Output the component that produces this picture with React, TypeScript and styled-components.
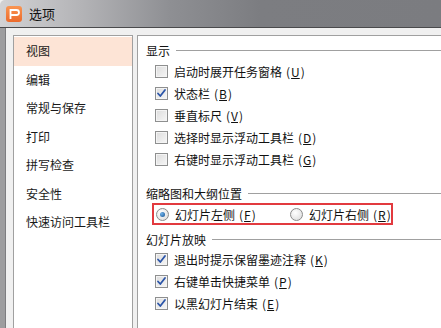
import React from "react";
import styled, { createGlobalStyle } from "styled-components";

const GlobalStyle = createGlobalStyle`
  html, body {
    margin: 0;
    padding: 0;
    width: 441px;
    height: 328px;
    overflow: hidden;
    background: #f0f0f0;
  }
  body {
    font-family: "Noto Sans CJK SC", "DejaVu Sans", sans-serif;
    font-size: 12px;
    color: #111;
  }
`;

interface IOption {
  label: string;
  key: string;
  checked: boolean;
}

const navItems = ["视图", "编辑", "常规与保存", "打印", "拼写检查", "安全性", "快速访问工具栏"];

const showOptions: IOption[] = [
  { label: "启动时展开任务窗格", key: "U", checked: false },
  { label: "状态栏", key: "B", checked: true },
  { label: "垂直标尺", key: "V", checked: false },
  { label: "选择时显示浮动工具栏", key: "D", checked: false },
  { label: "右键时显示浮动工具栏", key: "G", checked: false },
];

const showOptions2: IOption[] = [
  { label: "退出时提示保留墨迹注释", key: "K", checked: true },
  { label: "右键单击快捷菜单", key: "P", checked: true },
  { label: "以黑幻灯片结束", key: "E", checked: true },
];

const Label: React.FC<{ text: string; hotkey: string }> = ({ text, hotkey }) => (
  <LabelText>
    {text}
    <Hotkey>
      (<HotkeyLetter>{hotkey}</HotkeyLetter>)
    </Hotkey>
  </LabelText>
);

const Checkbox: React.FC<{ checked: boolean }> = ({ checked }) => (
  <CheckBoxStyle>
    {checked && (
      <svg width="11" height="11" viewBox="0 0 11 11">
        <path
          d="M2 5.5 L4.3 8 L9 2"
          fill="none"
          stroke="#2a54a8"
          strokeWidth="1.8"
          strokeLinecap="round"
          strokeLinejoin="round"
        />
      </svg>
    )}
  </CheckBoxStyle>
);

const Group: React.FC<{ title: string; top: number }> = ({ title, top }) => (
  <GroupHeader top={top}>
    <span>{title}</span>
    <HeaderLine />
  </GroupHeader>
);

const App: React.FC = () => {
  return (
    <>
      <GlobalStyle />
      <Window>
        <TitleBar>
          <AppIcon>
            <svg width="16" height="16" viewBox="0 0 16 16">
              <path
                d="M4.5 13 V4 H10.5 a2.5 2.5 0 0 1 0 5 H4.5"
                fill="none"
                stroke="#fff"
                strokeWidth="1.8"
              />
            </svg>
          </AppIcon>
          <Title>选项</Title>
        </TitleBar>
        <Body>
          <NavList>
            {navItems.map((item, i) => (
              <NavItem key={item} active={i === 0}>
                {item}
              </NavItem>
            ))}
          </NavList>
          <Panel>
            <Group title="显示" top={5} />
            <Rows top={1}>
              {showOptions.map((o) => (
                <Row key={o.key}>
                  <Checkbox checked={o.checked} />
                  <Label text={o.label} hotkey={o.key} />
                </Row>
              ))}
            </Rows>
            <Group title="缩略图和大纲位置" top={14} />
            <RadioBox>
              <RadioItem>
                <Radio selected />
                <Label text="幻灯片左侧" hotkey="F" />
              </RadioItem>
              <RadioItem>
                <Radio selected={false} />
                <Label text="幻灯片右侧" hotkey="R" />
              </RadioItem>
            </RadioBox>
            <Group title="幻灯片放映" top={5} />
            <Rows top={0}>
              {showOptions2.map((o) => (
                <Row key={o.key}>
                  <Checkbox checked={o.checked} />
                  <Label text={o.label} hotkey={o.key} />
                </Row>
              ))}
            </Rows>
          </Panel>
        </Body>
      </Window>
    </>
  );
};

export default App;

const Window = styled.div`
  width: 441px;
  height: 328px;
  display: flex;
  flex-direction: column;
  background: #f0f0f0;
`;

const TitleBar = styled.div`
  height: 27px;
  flex-shrink: 0;
  display: flex;
  align-items: center;
  padding-left: 6px;
  border-bottom: 1px solid #4a4a4c;
  border-top-left-radius: 5px;
  background: linear-gradient(
    to right,
    #d2d2d4 0px,
    #b4b4b7 80px,
    #8e8f93 170px,
    #7c7d81 260px,
    #7b7c80 441px
  );
`;

const AppIcon = styled.div`
  width: 16px;
  height: 16px;
  border-radius: 3px;
  background: linear-gradient(to bottom, #f99552, #ec6a2c);
  display: flex;
`;

const Title = styled.div`
  margin-left: 7px;
  font-size: 13px;
  color: #111;
`;

const Body = styled.div`
  flex: 1;
  display: flex;
  padding: 7px 0 0 8px;
  border-left: 5px solid #9d9d9f;
  box-shadow: inset 1px 0 0 #7d7d80;
  min-height: 0;
`;

const NavList = styled.div`
  width: 118px;
  border: 1px solid #a0a0a0;
  border-bottom: none;
  background: #fff;
  padding-top: 1px;
`;

const NavItem = styled.div<{ active: boolean }>`
  height: 28.5px;
  line-height: 28.5px;
  padding-left: 12px;
  background: ${(p) => (p.active ? "#fde4d6" : "transparent")};
  color: #1a1a1a;
`;

const Panel = styled.div`
  flex: 1;
  margin-left: 4px;
  border: 1px solid #a0a0a0;
  border-right: none;
  border-bottom: none;
  background: #fff;
  display: flex;
  flex-direction: column;
`;

const GroupHeader = styled.div<{ top: number }>`
  height: 18px;
  margin-top: ${(p) => p.top}px;
  padding-left: 8px;
  display: flex;
  align-items: center;
  color: #111;
`;

const HeaderLine = styled.div`
  flex: 1;
  height: 1px;
  background: #a0a0a0;
  margin-left: 6px;
  margin-top: 1px;
`;

const Rows = styled.div<{ top: number }>`
  margin-top: ${(p) => p.top}px;
  padding-left: 17px;
  display: flex;
  flex-direction: column;
`;

const Row = styled.div`
  height: 22px;
  display: flex;
  align-items: center;
`;

const CheckBoxStyle = styled.div`
  width: 11px;
  height: 11px;
  border: 1px solid #8e8f8f;
  background: linear-gradient(135deg, #dcdcdc, #f6f6f6);
  box-shadow: inset 0 0 0 1px #f4f4f4;
  display: flex;
  align-items: center;
  justify-content: center;
  flex-shrink: 0;
  margin-right: 6px;
`;

const LabelText = styled.span`
  white-space: nowrap;
  color: #111;
`;

const Hotkey = styled.span`
  margin-left: 4px;
  font-size: 12px;
`;

const HotkeyLetter = styled.span`
  text-decoration: underline;
  margin: 0 1px;
`;

const RadioBox = styled.div`
  margin: 1px 0 0 14px;
  width: 235px;
  height: 18px;
  border: 2px solid #e23a3f;
  display: flex;
  align-items: center;
  padding-left: 2px;
  align-self: flex-start;
`;

const RadioItem = styled.div`
  width: 134px;
  flex-shrink: 0;
  display: flex;
  align-items: center;
`;

const Radio = styled.div<{ selected: boolean }>`
  width: 11px;
  height: 11px;
  border-radius: 50%;
  border: 1px solid #8b8b8b;
  background: radial-gradient(circle at 40% 35%, #ffffff, #d8d8d8);
  display: flex;
  align-items: center;
  justify-content: center;
  margin-right: 6px;
  flex-shrink: 0;

  &::after {
    content: "";
    display: ${(p) => (p.selected ? "block" : "none")};
    width: 5px;
    height: 5px;
    border-radius: 50%;
    background: radial-gradient(circle at 35% 35%, #6fb2ea, #15508f);
  }
`;
